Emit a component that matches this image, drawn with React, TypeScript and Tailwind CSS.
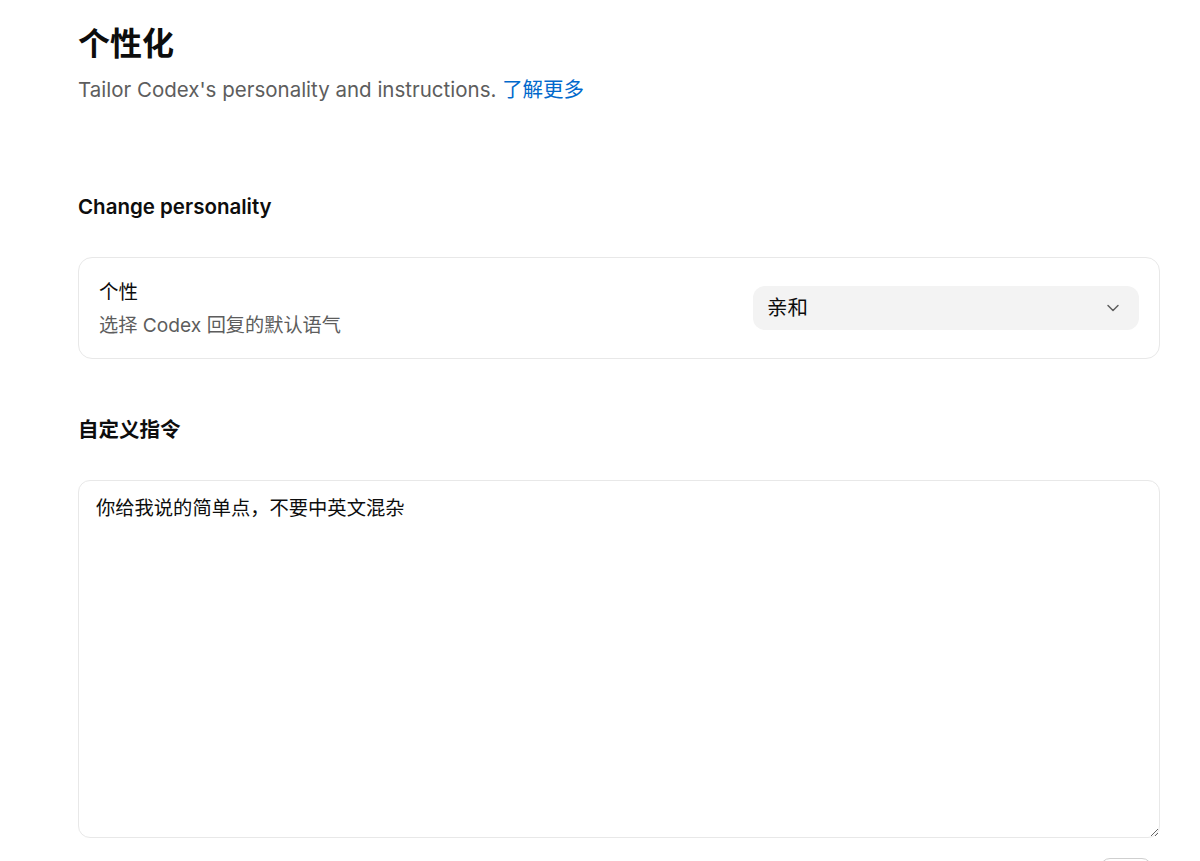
import { ChevronDown } from 'lucide-react';

export default function App() {
  return (
    <div className="min-h-screen bg-white pl-[78px] pr-[40px] pt-6 font-['Inter','Noto_Sans_CJK_SC',sans-serif] text-[#0d0d0d] antialiased">
      {/* Header */}
      <h1 className="text-[32px] font-bold leading-[40px]">个性化</h1>
      <p className="mt-[12px] text-[20.5px] leading-[28px] text-[#5d5d5d]">
        Tailor Codex's personality and instructions.{' '}
        <a href="#" className="text-[#0169cc]">
          了解更多
        </a>
      </p>

      {/* Personality */}
      <h2 className="mt-[89px] text-[20.5px] font-semibold leading-[28px]">Change personality</h2>
      <div className="mt-[36px] flex items-center justify-between rounded-[14px] border border-[#e8e8e8] px-5 py-[19px]">
        <div className="flex flex-col gap-[4px]">
          <span className="text-[19.5px] leading-[30px]">个性</span>
          <span className="text-[19.2px] leading-[28px] text-[#5d5d5d]">选择 Codex 回复的默认语气</span>
        </div>
        <button className="flex h-[44px] w-[386px] items-center justify-between rounded-[12px] bg-[#f3f3f3] pl-[14px] pr-[16px] text-[20.5px]">
          <span>亲和</span>
          <ChevronDown className="h-[20px] w-[20px] text-[#5d5d5d]" strokeWidth={1.75} />
        </button>
      </div>

      {/* Custom instructions */}
      <h2 className="mt-[57px] text-[20.5px] font-semibold leading-[28px]">自定义指令</h2>
      <textarea
        className="mt-[36px] block h-[358px] w-full rounded-[12px] border border-[#e8e8e8] px-[17px] pb-[12px] pt-[13px] text-[19.3px] leading-[28px] outline-none"
        defaultValue="你给我说的简单点，不要中英文混杂"
      />
      <div className="mt-5 flex justify-end pr-[8px]">
        <button className="h-[36px] w-[52px] rounded-[10px] border border-[#cfcfcf] bg-white" />
      </div>
    </div>
  );
}
